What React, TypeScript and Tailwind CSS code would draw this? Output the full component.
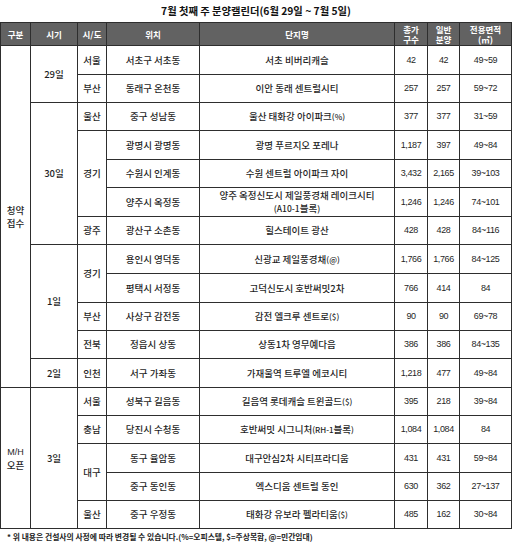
import React from "react";

type Span = { text: React.ReactNode; span: number };
type Row = {
  area?: Span;
  period?: Span;
  region?: Span;
  loc: string;
  name: React.ReactNode;
  total: string;
  general: string;
  size: string;
};

const spanCls: Record<number, string> = {
  1: "row-span-1",
  2: "row-span-2",
  3: "row-span-3",
  4: "row-span-4",
  5: "row-span-5",
  12: "row-span-12",
};

const rows: Row[] = [
  { area: { text: <>청약<br />접수</>, span: 12 }, period: { text: "29일", span: 2 }, region: { text: "서울", span: 1 }, loc: "서초구 서초동", name: "서초 비버리캐슬", total: "42", general: "42", size: "49~59" },
  { region: { text: "부산", span: 1 }, loc: "동래구 온천동", name: "이안 동래 센트럴시티", total: "257", general: "257", size: "59~72" },
  { period: { text: "30일", span: 5 }, region: { text: "울산", span: 1 }, loc: "중구 성남동", name: <>울산 태화강 아이파크<span className="text-[8px]">(%)</span></>, total: "377", general: "377", size: "31~59" },
  { region: { text: "경기", span: 3 }, loc: "광명시 광명동", name: "광명 푸르지오 포레나", total: "1,187", general: "397", size: "49~84" },
  { loc: "수원시 인계동", name: "수원 센트럴 아이파크 자이", total: "3,432", general: "2,165", size: "39~103" },
  { loc: "양주시 옥정동", name: <>양주 옥정신도시 제일풍경채 레이크시티<br /><span className="text-[8.5px]">(A10-1</span>블록<span className="text-[8.5px]">)</span></>, total: "1,246", general: "1,246", size: "74~101" },
  { region: { text: "광주", span: 1 }, loc: "광산구 소촌동", name: "힐스테이트 광산", total: "428", general: "428", size: "84~116" },
  { period: { text: "1일", span: 4 }, region: { text: "경기", span: 2 }, loc: "용인시 영덕동", name: <>신광교 제일풍경채<span className="text-[8px]">(@)</span></>, total: "1,766", general: "1,766", size: "84~125" },
  { loc: "평택시 서정동", name: "고덕신도시 호반써밋2차", total: "766", general: "414", size: "84" },
  { region: { text: "부산", span: 1 }, loc: "사상구 감전동", name: <>감전 엘크루 센트로<span className="text-[8px]">($)</span></>, total: "90", general: "90", size: "69~78" },
  { region: { text: "전북", span: 1 }, loc: "정읍시 상동", name: "상동1차 영무예다음", total: "386", general: "386", size: "84~135" },
  { period: { text: "2일", span: 1 }, region: { text: "인천", span: 1 }, loc: "서구 가좌동", name: "가재울역 트루엘 에코시티", total: "1,218", general: "477", size: "49~84" },
  { area: { text: <><span className="font-['Liberation_Sans',Arial,sans-serif] text-[9px]">M/H</span><br />오픈</>, span: 5 }, period: { text: "3일", span: 5 }, region: { text: "서울", span: 1 }, loc: "성북구 길음동", name: <>길음역 롯데캐슬 트윈골드<span className="text-[8px]">($)</span></>, total: "395", general: "218", size: "39~84" },
  { region: { text: "충남", span: 1 }, loc: "당진시 수청동", name: <>호반써밋 시그니처<span className="text-[8px]">(RH-1</span>블록<span className="text-[8px]">)</span></>, total: "1,084", general: "1,084", size: "84" },
  { region: { text: "대구", span: 2 }, loc: "동구 율암동", name: "대구안심2차 시티프라디움", total: "431", general: "431", size: "59~84" },
  { loc: "중구 동인동", name: "엑스디움 센트럴 동인", total: "630", general: "362", size: "27~137" },
  { region: { text: "울산", span: 1 }, loc: "중구 우정동", name: <>태화강 유보라 펠라티움<span className="text-[8px]">($)</span></>, total: "485", general: "162", size: "30~84" },
];

const cell = "bg-white flex items-center justify-center text-center";
const num = "font-['Liberation_Sans',Arial,sans-serif] text-[9px] tracking-[-0.4px]";
const head = "bg-[#626262] text-white font-bold flex items-center justify-center text-center text-[8.5px] leading-[10.5px]";

function C({ className, children }: { className: string; children: React.ReactNode }) {
  return (
    <div className={className}>
      <div>{children}</div>
    </div>
  );
}

export default function App() {
  return (
    <div className="w-[512px] h-[544px] bg-white text-[#1f1f1f] font-['Noto_Sans_CJK_KR','Noto_Sans',sans-serif]">
      <div className="h-[22px] flex items-center justify-center text-[10.3px] font-bold text-[#111]">
        7월 첫째 주 분양캘린더(6월 29일 ~ 7월 5일)
      </div>
      <div className="grid grid-cols-[29px_46px_28px_92px_194px_32px_31px_51px] grid-rows-[22px_28px_27px_27px_28px_27px_28px_27px_28px_28px_27px_27px_28px_27px_27px_28px_27px_27px] gap-px p-px bg-[#2e2e2e] text-[9.5px] leading-[13px] font-medium">
        <C className={head}>구분</C>
        <C className={head}>시기</C>
        <C className={head}>시/도</C>
        <C className={head}>위치</C>
        <C className={head}>단지명</C>
        <C className={head}>총가<br />구수</C>
        <C className={head}>일반<br />분양</C>
        <C className={head}>전용면적<br />(㎡)</C>
        {rows.map((r, i) => (
          <React.Fragment key={i}>
            {r.area && <C className={`${cell} ${spanCls[r.area.span]}`}>{r.area.text}</C>}
            {r.period && <C className={`${cell} ${spanCls[r.period.span]}`}>{r.period.text}</C>}
            {r.region && <C className={`${cell} ${spanCls[r.region.span]}`}>{r.region.text}</C>}
            <C className={cell}>{r.loc}</C>
            <C className={cell}>{r.name}</C>
            <C className={`${cell} ${num}`}>{r.total}</C>
            <C className={`${cell} ${num}`}>{r.general}</C>
            <C className={`${cell} ${num}`}>{r.size}</C>
          </React.Fragment>
        ))}
      </div>
      <div className="pt-[3px] pl-[7px] text-[7.8px] leading-[10px] font-bold text-[#222]">
        * 위 내용은 건설사의 사정에 따라 변경될 수 있습니다.(%=오피스텔, $=주상복합, @=민간임대)
      </div>
    </div>
  );
}
